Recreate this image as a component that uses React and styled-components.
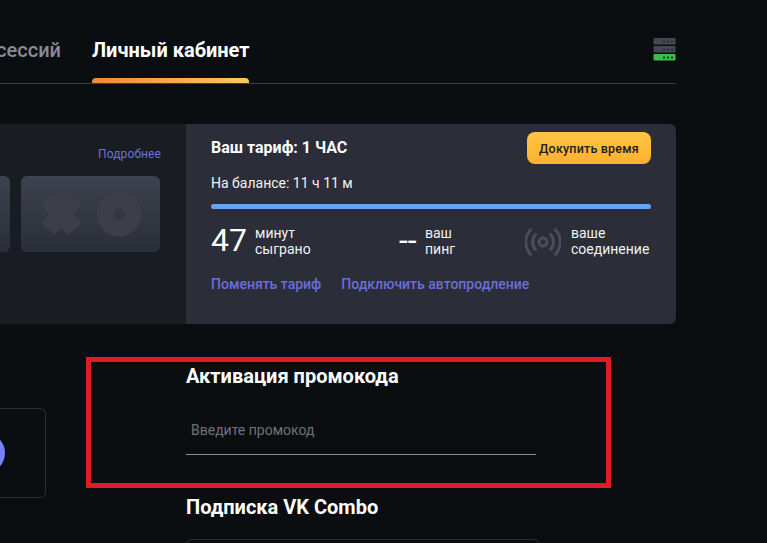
import React from "react";
import styled, { createGlobalStyle } from "styled-components";

const Global = createGlobalStyle`
  html, body { margin: 0; padding: 0; background: #0b0e11; }
  body { font-family: Roboto, "Noto Sans", sans-serif; color: #fff; overflow: hidden; }
`;

const Viewport = styled.div`
  position: relative;
  width: 767px;
  height: 543px;
  overflow: hidden;
  background: #0b0e11;
`;

const Shell = styled.div`
  width: 876px;
  margin-left: -200px;
`;

const Header = styled.header`
  display: flex;
  align-items: flex-start;
  height: 83px;
  border-bottom: 1px solid #3c3e42;
`;

const Tab = styled.div`
  flex: ${(p) => (p.$first ? "0 0 261px" : "0 0 157px")};
  margin-left: ${(p) => (p.$first ? "0" : "31px")};
  text-align: ${(p) => (p.$first ? "right" : "left")};
  position: relative;
  height: 83px;
  padding-top: 39px;
  box-sizing: border-box;
  white-space: nowrap;
  font-size: 20px;
  line-height: 23px;
  font-weight: ${(p) => (p.$first ? 500 : 700)};
  color: ${(p) => (p.$first ? "#8c8a96" : "#fff")};
`;

const TabMark = styled.span`
  position: absolute;
  left: 0;
  right: 0;
  bottom: 0;
  height: 5px;
  border-radius: 4px 4px 0 0;
  background: linear-gradient(90deg, #ee8a30, #f9ca5e);
`;

const ServerIcon = styled.svg`
  margin-left: auto;
  margin-top: 38px;
  display: block;
`;

const Card = styled.section`
  display: flex;
  height: 200px;
  margin-top: 40px;
  border-radius: 6px;
  overflow: hidden;
`;

const GamesPanel = styled.div`
  flex: 0 0 386px;
  box-sizing: border-box;
  background: #191c22;
  padding: 23px 25px 0 0;
`;

const MoreLink = styled.div`
  text-align: right;
  font-size: 12px;
  line-height: 14px;
  letter-spacing: 0.1px;
  color: #6b72d9;
`;

const Thumbs = styled.div`
  display: flex;
  justify-content: flex-end;
  gap: 11px;
  margin-top: 15px;
  margin-right: 1px;
`;

const Thumb = styled.div`
  width: 139px;
  height: 76px;
  border-radius: 6px;
  background: linear-gradient(180deg, #3c424e, #2a2e38);
  display: flex;
  align-items: center;
  justify-content: center;
`;

const PlanPanel = styled.div`
  flex: 1;
  box-sizing: border-box;
  background: #2b2e39;
  padding: 8px 25px 0;
`;

const PlanTop = styled.div`
  display: flex;
  justify-content: space-between;
  align-items: center;
  height: 32px;
`;

const PlanTitle = styled.div`
  font-size: 16px;
  font-weight: 700;
  line-height: 18px;
`;

const BuyButton = styled.button`
  width: 124px;
  height: 32px;
  border: 0;
  padding: 0;
  border-radius: 8px;
  background: linear-gradient(180deg, #fec543, #fdb12f);
  color: #22201c;
  font-family: inherit;
  font-size: 12.5px;
  font-weight: 500;
  letter-spacing: 0.2px;
`;

const Balance = styled.div`
  margin-top: 11px;
  font-size: 14px;
  line-height: 16px;
  color: #f2f2f2;
`;

const Progress = styled.div`
  height: 5px;
  margin-top: 13px;
  border-radius: 3px;
  background: #6aa1ee;
`;

const Stats = styled.div`
  display: grid;
  grid-template-columns: 188px 126px 1fr;
  margin-top: 14px;
  height: 34px;
`;

const Stat = styled.div`
  display: flex;
  align-items: center;
`;

const StatValue = styled.div`
  font-size: 32px;
  line-height: 34px;
  font-weight: 400;
  width: ${(p) => p.$width}px;
  flex: none;
  display: flex;
  align-items: center;
`;

const StatLabel = styled.div`
  font-size: 14px;
  line-height: 16px;
  margin-top: 2px;
  color: #f2f2f2;
  white-space: pre-line;
`;

const BroadcastIcon = styled.svg`
  margin-top: 4px;
`;

const Links = styled.div`
  display: flex;
  gap: 20px;
  margin-top: 19px;
`;

const PlanLink = styled.a`
  font-size: 14px;
  line-height: 16px;
  font-weight: 500;
  color: #6a6ed8;
`;

const Lower = styled.div`
  display: grid;
  grid-template-columns: 386px 350px;
`;

const SideColumn = styled.div`
  padding-top: 84px;
`;

const SideCard = styled.div`
  width: 246px;
  height: 90px;
  box-sizing: border-box;
  border: 1px solid #2a2d33;
  border-radius: 6px;
  display: flex;
  align-items: center;
  justify-content: flex-end;
  padding-right: 40px;
`;

const Avatar = styled.div`
  width: 40px;
  height: 40px;
  border-radius: 50%;
  background: #7a80f5;
`;

const FormColumn = styled.div`
  padding-top: 41px;
`;

const Heading = styled.h2`
  margin: 0;
  font-size: 20px;
  line-height: 22px;
  font-weight: 700;
  color: #fff;
`;

const PromoField = styled.div`
  margin-top: 27px;
  height: 41px;
  box-sizing: border-box;
  padding: 8px 5px 0;
  border-bottom: 1px solid #8d8e90;
  font-size: 14px;
  line-height: 16px;
  color: #717274;
`;

const ComboHeading = styled(Heading)`
  margin-top: 41px;
`;

const ComboCard = styled.div`
  margin-top: 21px;
  width: 354px;
  height: 60px;
  box-sizing: border-box;
  border: 1px solid #2a2d33;
  border-radius: 6px;
`;

const RedFrame = styled.div`
  position: absolute;
  left: 86px;
  top: 357px;
  width: 525px;
  height: 131px;
  box-sizing: border-box;
  border: 5px solid #e01b24;
  pointer-events: none;
`;

const Server = () => (
  <ServerIcon width="23" height="23" viewBox="0 0 23 23">
    {[0, 8, 16].map((y, i) => (
      <g key={y}>
        <rect x="0.5" y={y} width="22" height="6.5" rx="1" fill={i === 2 ? "#3dbd4e" : "#45484f"} />
        {[10, 14, 18].map((x) => (
          <rect key={x} x={x} y={y + 2.5} width="2" height="2" fill={i === 2 ? "#17451f" : "#2a2c31"} />
        ))}
      </g>
    ))}
  </ServerIcon>
);

const XO = () => (
  <svg width="102" height="46" viewBox="0 0 102 46">
    <path d="M8 8 35 38M35 8 8 38" stroke="#3c3f49" strokeWidth="18" fill="none" />
    <path
      fill="#3c3f49"
      fillRule="evenodd"
      d="M79 0.5a22.5 22.5 0 1 0 0 45 22.5 22.5 0 0 0 0-45Zm0 17a5.5 5.5 0 1 1 0 11 5.5 5.5 0 0 1 0-11Z"
    />
  </svg>
);

const Broadcast = () => (
  <BroadcastIcon width="36" height="28" viewBox="0 0 36 28" fill="none" stroke="#4b4e56" strokeWidth="3" strokeLinecap="round">
    <circle cx="18" cy="14" r="4" />
    <path d="M10.5 6.5a11 11 0 0 0 0 15" />
    <path d="M25.5 6.5a11 11 0 0 1 0 15" />
    <path d="M5.5 1.8a18 18 0 0 0 0 24.4" />
    <path d="M30.5 1.8a18 18 0 0 1 0 24.4" />
  </BroadcastIcon>
);

export default function App() {
  return (
    <Viewport>
      <Global />
      <Shell>
        <Header>
          <Tab $first>История сессий</Tab>
          <Tab>
            Личный кабинет
            <TabMark />
          </Tab>
          <Server />
        </Header>
        <Card>
          <GamesPanel>
            <MoreLink>Подробнее</MoreLink>
            <Thumbs>
              <Thumb />
              <Thumb>
                <XO />
              </Thumb>
            </Thumbs>
          </GamesPanel>
          <PlanPanel>
            <PlanTop>
              <PlanTitle>Ваш тариф: 1 ЧАС</PlanTitle>
              <BuyButton>Докупить время</BuyButton>
            </PlanTop>
            <Balance>На балансе: 11 ч 11 м</Balance>
            <Progress />
            <Stats>
              <Stat>
                <StatValue $width={44}>47</StatValue>
                <StatLabel>{"минут\nсыграно"}</StatLabel>
              </Stat>
              <Stat>
                <StatValue $width={26}>--</StatValue>
                <StatLabel>{"ваш\nпинг"}</StatLabel>
              </Stat>
              <Stat>
                <StatValue $width={46}>
                  <Broadcast />
                </StatValue>
                <StatLabel>{"ваше\nсоединение"}</StatLabel>
              </Stat>
            </Stats>
            <Links>
              <PlanLink>Поменять тариф</PlanLink>
              <PlanLink>Подключить автопродление</PlanLink>
            </Links>
          </PlanPanel>
        </Card>
        <Lower>
          <SideColumn>
            <SideCard>
              <Avatar />
            </SideCard>
          </SideColumn>
          <FormColumn>
            <Heading>Активация промокода</Heading>
            <PromoField>Введите промокод</PromoField>
            <ComboHeading>Подписка VK Combo</ComboHeading>
            <ComboCard />
          </FormColumn>
        </Lower>
      </Shell>
      <RedFrame />
    </Viewport>
  );
}
